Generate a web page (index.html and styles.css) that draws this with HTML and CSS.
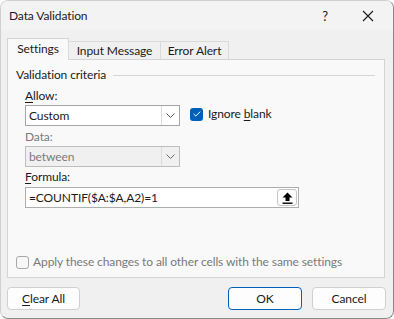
FILE: index.html
```html
<!DOCTYPE html>
<html>
<head>
<meta charset="utf-8">
<link rel="stylesheet" href="styles.css">
</head>
<body>
<div class="window">
  <div class="titlebar">
    <span class="title">Data Validation</span>
    <span class="help">?</span>
    <span class="close">
      <svg width="12" height="12" viewBox="0 0 12 12"><path d="M1 1 L11 11 M11 1 L1 11" stroke="#1a1a1a" stroke-width="1.1" fill="none"/></svg>
    </span>
  </div>
  <div class="tabs">
    <div class="tab active t1">Settings</div>
    <div class="tab t2">Input Message</div>
    <div class="tab t3">Error Alert</div>
  </div>
  <div class="panel">
    <div class="group-title"><span>Validation criteria</span><span class="rule"></span></div>
    <div class="criteria">
      <div class="row">
        <div class="col">
          <div class="label"><u>A</u>llow:</div>
          <div class="combo">
            <span class="combo-text">Custom</span>
            <span class="combo-btn"><svg width="9" height="5" viewBox="0 0 9 5"><path d="M0.5 0.5 L4.5 4.5 L8.5 0.5" stroke="#5a5a5a" stroke-width="1" fill="none"/></svg></span>
          </div>
        </div>
        <div class="ignore">
          <span class="check on"><svg width="8" height="6" viewBox="0 0 8 6"><path d="M0.7 3 L2.8 5 L7.3 0.6" stroke="#fff" stroke-width="1" fill="none"/></svg></span>
          <span>Ignore <u>b</u>lank</span>
        </div>
      </div>
      <div class="label disabled data-label">Data:</div>
      <div class="combo disabled-combo">
        <span class="combo-text">between</span>
        <span class="combo-btn"><svg width="9" height="5" viewBox="0 0 9 5"><path d="M0.5 0.5 L4.5 4.5 L8.5 0.5" stroke="#6a6a6a" stroke-width="1" fill="none"/></svg></span>
      </div>
      <div class="label formula-label"><u>F</u>ormula:</div>
      <div class="input">
        <span class="input-text">=COUNTIF($A:$A,A2)=1</span>
        <span class="ref-btn"><svg width="11" height="12" viewBox="0 0 11 12"><path d="M5.5 0.5 L10.5 5.5 L7.5 5.5 L7.5 9 L3.5 9 L3.5 5.5 L0.5 5.5 Z" fill="#000"/><rect x="0.5" y="10.5" width="10" height="1.4" fill="#000"/></svg></span>
      </div>
    </div>
    <div class="apply">
      <span class="check off"></span>
      <span>Apply these changes to all other cells with the same settings</span>
    </div>
  </div>
  <div class="buttons">
    <div class="btn"><u>C</u>lear All</div>
    <div class="spacer"></div>
    <div class="btn primary">OK</div>
    <div class="btn">Cancel</div>
  </div>
</div>
</body>
</html>
```
FILE: styles.css
```css
html, body {
  margin: 0;
  padding: 0;
  background: #ffffff;
}
body {
  font-family: Lato, "Noto Sans", sans-serif;
  font-size: 12px;
  line-height: 16px;
  letter-spacing: -0.1px;
  color: #1a1a1a;
}
u { text-decoration: underline; text-underline-offset: 2px; }
.window {
  width: 394px;
  height: 319px;
  box-sizing: border-box;
  border: 1px solid;
  border-color: #d0d0d0 #8a8a8a #8a8a8a #d0d0d0;
  border-radius: 8px;
  background: #f0f0f0;
  overflow: hidden;
  display: flex;
  flex-direction: column;
}
.titlebar {
  height: 29px;
  background: #f3f3f3;
  display: flex;
  align-items: center;
  padding-left: 8px;
}
.title { flex: 1; }
.help {
  width: 46px;
  text-align: center;
  font-size: 13px;
  margin-right: -3px;
}
.close {
  width: 46px;
  display: flex;
  justify-content: center;
  margin-right: 2px;
}
.tabs {
  display: flex;
  align-items: flex-end;
  padding: 8px 0 0 6px;
  position: relative;
  z-index: 1;
}
.tab {
  height: 18px;
  box-sizing: border-box;
  border: 1px solid #dadada;
  border-bottom: none;
  background: #f0f0f0;
  display: flex;
  align-items: center;
  justify-content: center;
  margin-left: -1px;
}
.t1 { width: 62px; margin-left: 0; }
.t2 { width: 93px; }
.t3 { width: 69px; }
.tab.active {
  background: #f9f9f9;
  border-color: #d4d4d4;
  margin-bottom: -1px;
  padding-bottom: 1px;
  height: 22px;
}
.panel {
  margin: 0 8px 0 6px;
  height: 219px;
  box-sizing: border-box;
  border: 1px solid #d4d4d4;
  background: #f9f9f9;
  padding: 7px 8px 7px 8px;
  display: flex;
  flex-direction: column;
}
.group-title {
  display: flex;
  align-items: center;
}
.rule {
  flex: 1;
  height: 1px;
  background: #d6d6d6;
  margin-left: 7px;
  margin-right: 1px;
}
.criteria {
  padding-left: 9px;
  margin-top: 5px;
}
.row {
  display: flex;
  align-items: flex-start;
}
.col { width: 155px; }
.label { height: 16px; margin-bottom: 1px; }
.disabled { color: #7a7a7a; }
.combo {
  width: 155px;
  height: 21px;
  box-sizing: border-box;
  border: 1px solid #a5a5a5;
  background: #ffffff;
  display: flex;
  align-items: stretch;
}
.combo-text {
  flex: 1;
  padding-left: 3px;
  display: flex;
  align-items: center;
}
.combo-btn {
  width: 17px;
  border-left: 1px solid #dcdcdc;
  display: flex;
  align-items: center;
  justify-content: center;
}
.disabled-combo {
  background: #f0f0f0;
  border-color: #bdbdbd;
  color: #7a7a7a;
}
.ignore {
  display: flex;
  align-items: center;
  margin-left: 10px;
  margin-top: 18px;
  gap: 5px;
}
.check {
  width: 13px;
  height: 13px;
  box-sizing: border-box;
  border-radius: 3px;
  display: flex;
  align-items: center;
  justify-content: center;
}
.check.on { background: #005fb8; }
.check.off { border: 1px solid #a8a8a8; background: #f7f7f7; }
.data-label { margin-top: 3px; }
.formula-label { margin-top: 2px; margin-bottom: 2px; }
.input {
  width: 274px;
  height: 21px;
  box-sizing: border-box;
  border: 1px solid #adadad;
  background: #ffffff;
  display: flex;
  align-items: center;
  padding-right: 1px;
}
.input-text { flex: 1; padding-left: 3px; }
.ref-btn {
  width: 20px;
  height: 17px;
  box-sizing: border-box;
  border: 1px solid #c6c6c6;
  border-radius: 3px;
  background: #fdfdfd;
  display: flex;
  align-items: center;
  justify-content: center;
}
.apply {
  margin-top: auto;
  display: flex;
  align-items: center;
  gap: 4px;
  color: #7a7a7a;
}
.buttons {
  display: flex;
  padding: 9px 7px 0 6px;
  gap: 10px;
}
.spacer { flex: 1; }
.btn {
  width: 73px;
  height: 23px;
  box-sizing: border-box;
  border: 1px solid #d0d0d0;
  border-radius: 4px;
  background: #fdfdfd;
  display: flex;
  align-items: center;
  justify-content: center;
}
.btn.primary { border-color: #005fb8; width: 74px; }
.btn:last-child { width: 74px; }
```
